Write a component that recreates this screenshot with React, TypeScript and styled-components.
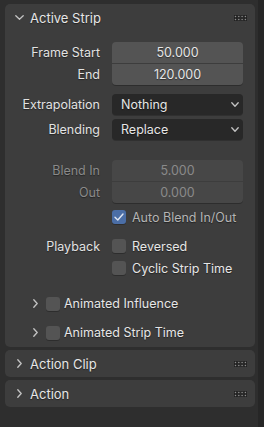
import React from "react";
import styled, { createGlobalStyle } from "styled-components";

const Global = createGlobalStyle`
  html, body { margin: 0; padding: 0; background: #2e2e2e; }
  body { font-family: Inter, "Noto Sans", "DejaVu Sans", sans-serif; -webkit-font-smoothing: antialiased; }
`;

const Root = styled.div`
  width: 264px;
  height: 427px;
  display: flex;
  background: #2e2e2e;
  overflow: hidden;
`;

const Column = styled.div`
  flex: 0 0 250px;
  margin-left: 5px;
  padding-top: 4px;
  display: flex;
  flex-direction: column;
  gap: 3px;
`;

const Gutter = styled.div`
  flex: 1;
  margin-left: 3px;
  background: #262626;
`;

const Panel = styled.section`
  background: #3d3d3d;
  border-radius: 5px;
`;

const Header = styled.div`
  height: 27px;
  display: flex;
  align-items: center;
  padding: 0 8px 0 10px;
  color: #e6e6e6;
  font-size: 13px;
  text-shadow: 0 1px 1px rgba(0, 0, 0, 0.45);
`;

const HeaderChevron = styled.span`
  width: 9px;
  display: flex;
  justify-content: center;
`;

const HeaderTitle = styled.span`
  flex: 1;
  margin-left: 6px;
`;

const Body = styled.div`
  padding: 11px 12px 0 0;
  display: flex;
  flex-direction: column;
`;

const Row = styled.div<{ $h?: number; $mt?: number }>`
  display: grid;
  grid-template-columns: 1fr 131px;
  column-gap: 12px;
  align-items: center;
  height: ${(p) => p.$h ?? 21}px;
  margin-top: ${(p) => p.$mt ?? 0}px;
`;

const Label = styled.span<{ $dim?: boolean }>`
  text-align: right;
  font-size: 12.5px;
  color: ${(p) => (p.$dim ? "#8a8a8a" : "#e2e2e2")};
  text-shadow: 0 1px 1px rgba(0, 0, 0, 0.4);
  white-space: nowrap;
`;

const NumField = styled.div<{ $pos: "top" | "bottom"; $dim?: boolean }>`
  height: 21px;
  display: flex;
  align-items: center;
  justify-content: center;
  font-size: 12.5px;
  color: ${(p) => (p.$dim ? "#8a8a8a" : "#e6e6e6")};
  background: ${(p) => (p.$dim ? "#474747" : "#545454")};
  border-radius: ${(p) => (p.$pos === "top" ? "4px 4px 0 0" : "0 0 4px 4px")};
  box-shadow: ${(p) => (p.$pos === "bottom" ? "0 1px 0 rgba(0,0,0,0.25)" : "none")};
  text-shadow: ${(p) => (p.$dim ? "none" : "0 1px 1px rgba(0, 0, 0, 0.45)")};
`;

const Dropdown = styled.div`
  height: 21px;
  display: flex;
  align-items: center;
  padding: 0 4px 0 9px;
  background: #282828;
  border-radius: 4px;
  color: #e6e6e6;
  font-size: 12.5px;
  text-shadow: 0 1px 1px rgba(0, 0, 0, 0.5);
  box-shadow: 0 1px 0 rgba(0, 0, 0, 0.2);
`;

const DropText = styled.span`
  flex: 1;
`;

const CheckWrap = styled.div<{ $dim?: boolean }>`
  display: flex;
  align-items: center;
  gap: 6px;
  font-size: 12.5px;
  color: ${(p) => (p.$dim ? "#b4b4b4" : "#e6e6e6")};
  text-shadow: 0 1px 1px rgba(0, 0, 0, 0.45);
  white-space: nowrap;
`;

const Box = styled.div<{ $on?: boolean }>`
  width: 14px;
  height: 14px;
  flex: 0 0 14px;
  border-radius: 3px;
  background: ${(p) => (p.$on ? "#4b6ea6" : "#545454")};
  box-shadow: 0 1px 0 rgba(0, 0, 0, 0.25);
  display: flex;
  align-items: center;
  justify-content: center;
`;

const SubRow = styled.div<{ $mt?: number }>`
  height: 29px;
  margin-top: ${(p) => p.$mt ?? 0}px;
  display: flex;
  align-items: center;
  padding-left: 26px;
  color: #e6e6e6;
  font-size: 12.5px;
  text-shadow: 0 1px 1px rgba(0, 0, 0, 0.45);
`;

const SubChevron = styled.span`
  width: 9px;
  display: flex;
  justify-content: center;
  margin-right: 6px;
`;

const SubText = styled.span`
  margin-left: 4px;
`;

const ChevronDown = ({ w = 9, h = 5 }: { w?: number; h?: number }) => (
  <svg width={w} height={h} viewBox={`0 0 ${w} ${h}`} style={{ display: "block" }}>
    <polyline
      points={`0.8,0.8 ${w / 2},${h - 0.8} ${w - 0.8},0.8`}
      fill="none"
      stroke="#c4c4c4"
      strokeWidth="1.3"
      strokeLinecap="round"
      strokeLinejoin="round"
    />
  </svg>
);

const ChevronRight = () => (
  <svg width="5" height="9" viewBox="0 0 5 9" style={{ display: "block" }}>
    <polyline
      points="0.8,0.8 4.2,4.5 0.8,8.2"
      fill="none"
      stroke="#c4c4c4"
      strokeWidth="1.3"
      strokeLinecap="round"
      strokeLinejoin="round"
    />
  </svg>
);

const Grip = () => (
  <svg width="13" height="6" viewBox="0 0 13 6" style={{ display: "block" }}>
    {[0, 1, 2, 3].map((c) =>
      [0, 1].map((r) => (
        <g key={`${c}-${r}`}>
          <rect x={c * 3.3} y={r * 3} width="3" height="3" fill="#1e1e1e" />
          <rect x={c * 3.3 + 0.8} y={r * 3 + 0.8} width="1.4" height="1.4" fill="#8c8c8c" />
        </g>
      ))
    )}
  </svg>
);

const Check = () => (
  <svg width="10" height="8" viewBox="0 0 10 8" style={{ display: "block" }}>
    <polyline
      points="1,4.2 3.8,7 9,1"
      fill="none"
      stroke="#dfe6f2"
      strokeWidth="1.4"
      strokeLinecap="round"
      strokeLinejoin="round"
    />
  </svg>
);

const HeaderBar = ({ title, open }: { title: string; open?: boolean }) => (
  <Header>
    <HeaderChevron>{open ? <ChevronDown /> : <ChevronRight />}</HeaderChevron>
    <HeaderTitle>{title}</HeaderTitle>
    <Grip />
  </Header>
);

export default function App() {
  return (
    <Root>
      <Global />
      <Column>
        <Panel>
          <HeaderBar title="Active Strip" open />
          <Body>
            <Row>
              <Label>Frame Start</Label>
              <NumField $pos="top">50.000</NumField>
            </Row>
            <Row $mt={1}>
              <Label>End</Label>
              <NumField $pos="bottom">120.000</NumField>
            </Row>
            <Row $mt={9}>
              <Label>Extrapolation</Label>
              <Dropdown>
                <DropText>Nothing</DropText>
                <ChevronDown w={8} h={5} />
              </Dropdown>
            </Row>
            <Row $mt={4}>
              <Label>Blending</Label>
              <Dropdown>
                <DropText>Replace</DropText>
                <ChevronDown w={8} h={5} />
              </Dropdown>
            </Row>
            <Row $mt={20}>
              <Label $dim>Blend In</Label>
              <NumField $pos="top" $dim>
                5.000
              </NumField>
            </Row>
            <Row $mt={1}>
              <Label $dim>Out</Label>
              <NumField $pos="bottom" $dim>
                0.000
              </NumField>
            </Row>
            <Row $h={22} $mt={3}>
              <span />
              <CheckWrap $dim>
                <Box $on>
                  <Check />
                </Box>
                Auto Blend In/Out
              </CheckWrap>
            </Row>
            <Row $h={22} $mt={7}>
              <Label>Playback</Label>
              <CheckWrap>
                <Box />
                Reversed
              </CheckWrap>
            </Row>
            <Row $h={22}>
              <span />
              <CheckWrap>
                <Box />
                Cyclic Strip Time
              </CheckWrap>
            </Row>
            <SubRow $mt={10}>
              <SubChevron>
                <ChevronRight />
              </SubChevron>
              <Box />
              <SubText>Animated Influence</SubText>
            </SubRow>
            <SubRow>
              <SubChevron>
                <ChevronRight />
              </SubChevron>
              <Box />
              <SubText>Animated Strip Time</SubText>
            </SubRow>
          </Body>
        </Panel>
        <Panel>
          <HeaderBar title="Action Clip" />
        </Panel>
        <Panel>
          <HeaderBar title="Action" />
        </Panel>
      </Column>
      <Gutter />
    </Root>
  );
}
